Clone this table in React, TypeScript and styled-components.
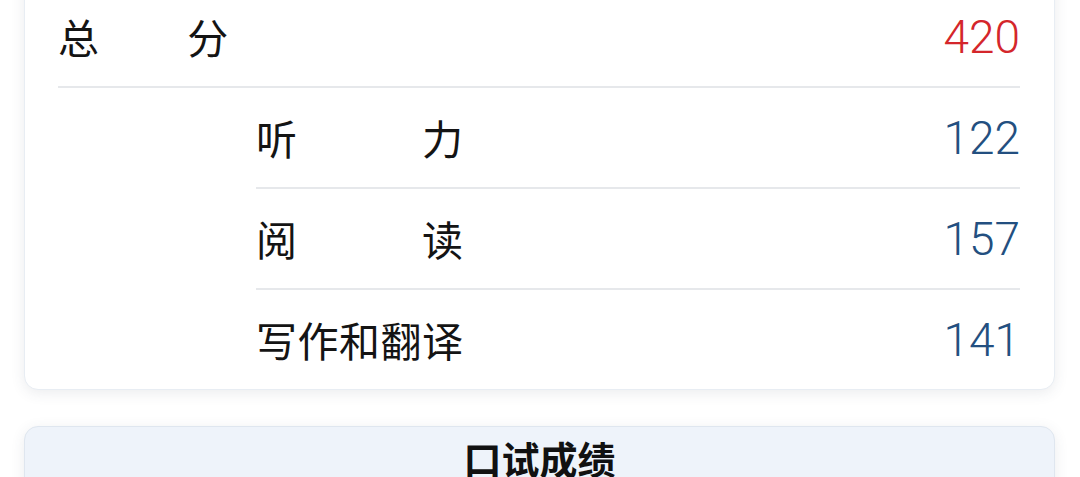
import React from "react";
import styled, {createGlobalStyle} from "styled-components";

const GlobalStyle = createGlobalStyle`
  html, body {
    margin: 0;
    padding: 0;
    background: #ffffff;
    overflow: hidden;
  }

  body {
    font-family: "Noto Sans CJK SC", "Noto Sans", sans-serif;
    color: #111111;
  }
`;

const Page = styled.div`
  display: flex;
  flex-direction: column;
  gap: 36px;
  padding: 0 25px 0 24px;
  margin-top: -32px;
`;

const Card = styled.div<{ $tinted?: boolean }>`
  background: ${p => p.$tinted ? "#eef3fa" : "#ffffff"};
  border-radius: 14px;
  border: 1px solid ${p => p.$tinted ? "#dfe6ef" : "#e8edf3"};
  box-shadow: 0 3px 14px rgba(60, 70, 90, 0.10);
  padding: ${p => p.$tinted ? "14px 34px 0" : "18px 34px 0 33px"};
`;

const ScoreList = styled.div`
  display: flex;
  flex-direction: column;
`;

const Row = styled.div<{ $indent?: boolean; $last?: boolean }>`
  display: flex;
  align-items: center;
  justify-content: space-between;
  height: 99px;
  margin-left: ${p => p.$indent ? "198px" : "0"};
  border-bottom: ${p => p.$last ? "none" : "2px solid #e6e8eb"};
`;

const Label = styled.span<{ $chars: number }>`
  display: inline-block;
  width: ${p => p.$chars}em;
  font-size: 41px;
  line-height: 1;
  text-align: justify;
  text-align-last: justify;
  color: #141414;
`;

const Value = styled.span<{ $total?: boolean }>`
  font-family: "Roboto", "Noto Sans", sans-serif;
  font-size: 46px;
  font-weight: 300;
  line-height: 1;
  color: ${p => p.$total ? "#d4262b" : "#234f80"};
`;

const Title = styled.div`
  text-align: center;
  font-size: 38px;
  font-weight: 700;
  line-height: 0.9;
  height: 80px;
  color: #111111;
`;

const parts = [
    {name: "听力", score: 122},
    {name: "阅读", score: 157},
    {name: "写作和翻译", score: 141},
];

const App = () => {
    return (
        <>
            <GlobalStyle/>
            <Page>
                <Card>
                    <ScoreList>
                        <Row>
                            <Label $chars={4.15}>总分</Label>
                            <Value $total>420</Value>
                        </Row>
                        {parts.map((p, i) => (
                            <Row key={p.name} $indent $last={i === parts.length - 1}>
                                <Label $chars={5.05}>{p.name}</Label>
                                <Value>{p.score}</Value>
                            </Row>
                        ))}
                    </ScoreList>
                </Card>
                <Card $tinted>
                    <Title>口试成绩</Title>
                </Card>
            </Page>
        </>
    );
};

export default App;
